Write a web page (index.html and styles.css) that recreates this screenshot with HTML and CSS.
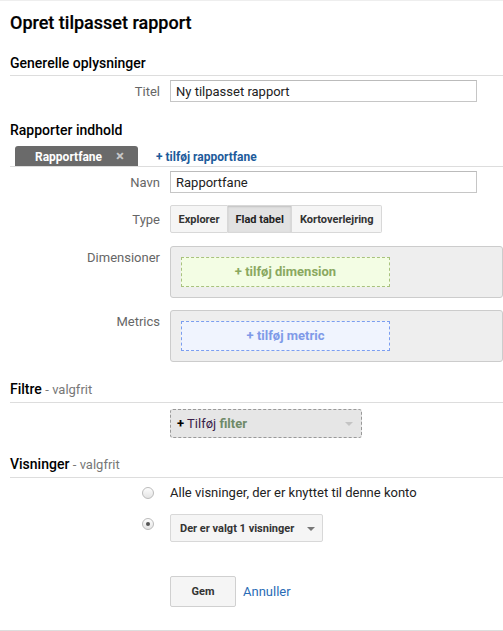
FILE: index.html
```html
<!DOCTYPE html>
<html lang="da">
<head>
  <meta charset="UTF-8" />
  <meta name="viewport" content="width=device-width, initial-scale=1.0" />
  <title>Opret tilpasset rapport</title>
  <link rel="stylesheet" href="styles.css">
</head>
<body>
  <div class="page">
    <h1>Opret tilpasset rapport</h1>

    <!-- Generelt -->
    <h2 class="section-title">Generelle oplysninger</h2>
    <div class="row row-first">
      <label class="row-label" for="title">Titel</label>
      <input class="text-input" type="text" id="title" value="Ny tilpasset rapport" />
    </div>

    <!-- Indhold -->
    <h2 class="section-title no-rule">Rapporter indhold</h2>
    <div class="tabs">
      <div class="tab">Rapportfane <span class="tab-close">&times;</span></div>
      <a class="add-tab" href="#">+ tilføj rapportfane</a>
    </div>
    <div class="row row-first">
      <label class="row-label" for="tabname">Navn</label>
      <input class="text-input" type="text" id="tabname" value="Rapportfane" />
    </div>
    <div class="row row-type">
      <span class="row-label">Type</span>
      <div class="btn-group">
        <button class="seg">Explorer</button>
        <button class="seg active">Flad tabel</button>
        <button class="seg">Kortoverlejring</button>
      </div>
    </div>
    <div class="row row-well">
      <span class="row-label">Dimensioner</span>
      <div class="well">
        <div class="drop drop-dim">+ tilføj dimension</div>
      </div>
    </div>
    <div class="row row-well">
      <span class="row-label">Metrics</span>
      <div class="well">
        <div class="drop drop-metric">+ tilføj metric</div>
      </div>
    </div>

    <!-- Filtre -->
    <h2 class="section-title opt">Filtre <span class="optional">- valgfrit</span></h2>
    <div class="row row-filter">
      <span class="row-label"></span>
      <div class="filter-select">
        <span><b class="plus">+</b> <span class="f-add">Tilføj</span> <b class="f-word">filter</b></span>
        <span class="caret light"></span>
      </div>
    </div>

    <!-- Visninger -->
    <h2 class="section-title opt views-title">Visninger <span class="optional">- valgfrit</span></h2>
    <div class="radio-row">
      <span class="radio"></span>
      <span class="radio-text">Alle visninger, der er knyttet til denne konto</span>
    </div>
    <div class="radio-row radio-row-2">
      <span class="radio checked"></span>
      <button class="views-select">Der er valgt 1 visninger <span class="caret"></span></button>
    </div>

    <div class="actions">
      <button class="save">Gem</button>
      <a class="cancel" href="#">Annuller</a>
    </div>
  </div>
</body>
</html>
```

FILE: styles.css
```css
body {
  margin: 0;
  font-family: Roboto, "Liberation Sans", Arial, sans-serif;
  color: #222;
  background: #fff;
  overflow-x: hidden;
  border-top: 1px solid #eee;
}
.page {
  padding: 10px 0 0 10px;
  min-height: 619px;
  border-bottom: 1px solid #ddd;
}
h1 {
  margin: 0;
  font-size: 18px;
  line-height: 24px;
  font-weight: 500;
  color: #000;
  -webkit-text-stroke: 0.2px #000;
}
.section-title {
  margin: 18px 0 0;
  font-size: 14px;
  line-height: 20px;
  font-weight: 500;
  color: #000;
  padding-bottom: 2px;
  border-bottom: 1px solid #ddd;
}
.section-title.no-rule {
  border-bottom: none;
  padding-bottom: 0;
}
.optional {
  font-weight: 400;
  font-size: 13px;
  color: #777;
}
.row {
  display: flex;
  align-items: center;
}
.row-first {
  margin-top: 4px;
}
.row-label {
  width: 150px;
  padding-right: 10px;
  text-align: right;
  font-size: 13px;
  color: #666;
  flex-shrink: 0;
}
.text-input {
  box-sizing: border-box;
  width: 307px;
  height: 22px;
  margin: 0;
  padding: 0 5px;
  border: 1px solid #c6c6c6;
  border-top-color: #bbb;
  font-family: inherit;
  font-size: 13px;
  color: #222;
}

/* faner */
.tabs {
  display: flex;
  align-items: flex-end;
  margin-top: 6px;
  padding-left: 5px;
  border-bottom: 1px solid #ddd;
}
.tab {
  width: 123px;
  height: 20px;
  box-sizing: border-box;
  padding-left: 20px;
  background: #6a6a6a;
  border-radius: 3px 3px 0 0;
  color: #fff;
  font-size: 12px;
  font-weight: 700;
  line-height: 20px;
}
.tab-close {
  margin-left: 11px;
  font-size: 15px;
  font-weight: 700;
  color: #c8c8c8;
}
.add-tab {
  margin-left: 18px;
  font-size: 12px;
  font-weight: 700;
  color: #1e5b9b;
  text-decoration: none;
  line-height: 18px;
}

.row-type {
  margin-top: 12px;
}
.btn-group {
  display: flex;
}
.seg {
  height: 28px;
  margin: 0;
  padding: 0 7.5px;
  font-family: inherit;
  font-size: 11px;
  font-weight: 700;
  color: #333;
  background: #f5f5f5;
  border: 1px solid #d8d8d8;
  border-left: none;
}
.seg:first-child {
  border-left: 1px solid #d8d8d8;
  border-radius: 2px 0 0 2px;
}
.seg:last-child {
  border-radius: 0 2px 2px 0;
}
.seg.active {
  background: #e2e2e2;
  box-shadow: inset 0 1px 2px rgba(0,0,0,0.15);
  color: #222;
}

.row-well {
  align-items: flex-start;
  margin-top: 13px;
}
.row-well + .row-well {
  margin-top: 12px;
}
.row-well .row-label {
  padding-top: 4px;
}
.well {
  box-sizing: border-box;
  width: 360px;
  height: 52px;
  padding: 10px 0 0 10px;
  background: #eee;
  border: 1px solid #ccc;
  border-radius: 3px;
}
.drop {
  box-sizing: border-box;
  width: 209px;
  height: 30px;
  line-height: 28px;
  text-align: center;
  font-size: 13px;
  font-weight: 700;
}
.drop-dim {
  background: #f3fde4;
  border: 1px dashed #a9c27e;
  color: #8aa860;
}
.drop-metric {
  background: #f0f4fe;
  border: 1px dashed #7b9ef0;
  color: #7f9ae8;
}

/* filtre */
.section-title.opt {
  margin-top: 17px;
}
.row-filter {
  margin-top: 6px;
}
.filter-select {
  box-sizing: border-box;
  width: 192px;
  height: 29px;
  padding: 0 8px 0 6px;
  display: flex;
  align-items: center;
  justify-content: space-between;
  background: #e6e6e6;
  border: 1px dashed #999;
  border-radius: 3px;
  font-size: 13px;
}
.plus {
  color: #000;
}
.f-add {
  color: #3a1f4a;
}
.f-word {
  color: #6f8a68;
}
.caret {
  display: inline-block;
  width: 0;
  height: 0;
  border-left: 4px solid transparent;
  border-right: 4px solid transparent;
  border-top: 4px solid #777;
  vertical-align: middle;
}
.caret.light {
  border-top-color: #c4c4c4;
}

/* visninger */
.section-title.views-title {
  margin-top: 16px;
}
.radio-row {
  display: flex;
  align-items: center;
  padding-left: 132px;
  margin-top: 7px;
}
.radio {
  box-sizing: border-box;
  width: 12px;
  height: 12px;
  margin-right: 16px;
  border-radius: 50%;
  border: 1px solid #bbb;
  background: linear-gradient(#fdfdfd, #e4e4e4);
  position: relative;
}
.radio.checked::after {
  content: "";
  position: absolute;
  left: 3px;
  top: 3px;
  width: 4px;
  height: 4px;
  border-radius: 50%;
  background: #555;
}
.radio-text {
  font-size: 13px;
  color: #222;
  line-height: 16px;
}
.radio-row-2 {
  align-items: flex-start;
  margin-top: 13px;
}
.radio-row-2 .radio {
  margin-top: 4px;
}
.views-select {
  box-sizing: border-box;
  width: 153px;
  height: 28px;
  margin: 0;
  padding: 0 0 0 9px;
  text-align: left;
  font-family: inherit;
  font-size: 11px;
  font-weight: 700;
  color: #333;
  background: #f5f5f5;
  border: 1px solid #d8d8d8;
  border-radius: 2px;
}
.views-select .caret {
  margin-left: 10px;
}

.actions {
  display: flex;
  align-items: center;
  margin: 34px 0 0 160px;
}
.save {
  width: 66px;
  height: 31px;
  margin: 0;
  font-family: inherit;
  font-size: 11px;
  font-weight: 700;
  color: #333;
  background: #f5f5f5;
  border: 1px solid #d0d0d0;
  border-radius: 2px;
}
.cancel {
  margin-left: 7px;
  font-size: 13px;
  color: #2a6cb6;
  text-decoration: none;
}
```
